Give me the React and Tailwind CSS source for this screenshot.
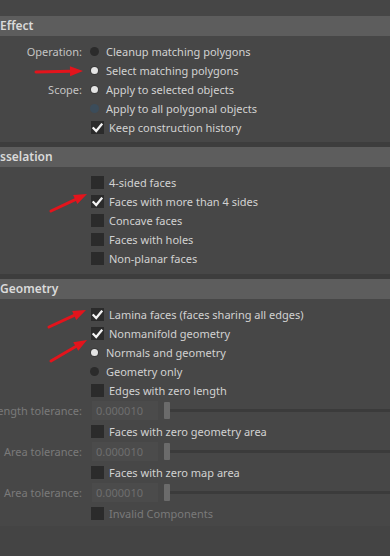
import React from "react";

const font = { fontFamily: '"Noto Sans", "Open Sans", sans-serif' };

function Header({ children }) {
  return (
    <div className="h-[20px] bg-[#5d5d5d] flex items-center text-[12px] font-semibold text-[#dadada] leading-none pl-0">
      {children}
    </div>
  );
}

function Label({ children, dim }) {
  return (
    <div className={`w-[82px] shrink-0 flex justify-end ${dim ? "text-[#7a7a7a]" : "text-[#c4c4c4]"}`}>
      <span className="whitespace-nowrap shrink-0">{children}</span>
    </div>
  );
}

function Radio({ label, state, text }) {
  let dot;
  if (state === "on") {
    dot = (
      <div className="w-[9px] h-[9px] rounded-full bg-[#3a3a3a] flex items-center justify-center">
        <div className="w-[7px] h-[7px] rounded-full bg-[#e4e4e4]" />
      </div>
    );
  } else if (state === "blue") {
    dot = <div className="w-[9px] h-[9px] rounded-full bg-[#3b4c5a]" />;
  } else {
    dot = <div className="w-[9px] h-[9px] rounded-full bg-[#2b2b2b]" />;
  }
  return (
    <div className="h-[19px] flex items-center">
      <Label>{label}</Label>
      <div className="ml-[8px] w-[9px] flex items-center">{dot}</div>
      <div className="ml-[7px] text-[#d2d2d2] whitespace-nowrap">{text}</div>
    </div>
  );
}

function Check({ checked, text, dim, tall }) {
  return (
    <div className={`${tall ? "h-[20px]" : "h-[19px]"} flex items-center`}>
      <Label />
      <div className="ml-[9px] w-[13px] h-[13px] bg-[#2b2b2b] flex items-center justify-center">
        {checked && (
          <svg width="11" height="10" viewBox="0 0 11 10">
            <path d="M1.5 5.2 L4.2 8 L9.5 1.5" stroke="#f4f4f4" strokeWidth="2.2" fill="none" strokeLinecap="square" />
          </svg>
        )}
      </div>
      <div className={`ml-[5px] whitespace-nowrap ${dim ? "text-[#7a7a7a]" : "text-[#d2d2d2]"}`}>{text}</div>
    </div>
  );
}

function SliderRow({ label }) {
  return (
    <div className="h-[21px] flex items-center">
      <Label dim>{label}</Label>
      <div className="ml-[10px] w-[66px] h-[19px] bg-[#4b4b4b] flex items-center pl-[4px] text-[#6e6e6e]">0.000010</div>
      <div className="ml-[6px] w-[6px] h-[17px] bg-[#6b6b6b] rounded-[1px]" />
      <div className="flex-1 h-[3px] bg-[#3b3b3b]" />
    </div>
  );
}

function Arrow({ x1, y1, x2, y2 }) {
  const ang = Math.atan2(y2 - y1, x2 - x1);
  const len = 13;
  const w = 5;
  const bx = x2 - len * Math.cos(ang);
  const by = y2 - len * Math.sin(ang);
  const px = -Math.sin(ang) * w;
  const py = Math.cos(ang) * w;
  return (
    <g>
      <line x1={x1} y1={y1} x2={bx} y2={by} stroke="#e3141c" strokeWidth="3" strokeLinecap="round" />
      <polygon points={`${x2},${y2} ${bx + px},${by + py} ${bx - px},${by - py}`} fill="#e3141c" />
    </g>
  );
}

export default function App() {
  return (
    <div className="relative w-[390px] h-[556px] bg-[#444444] overflow-hidden text-[11px] leading-none" style={font}>
      <div className="h-[16px] bg-[#464646]" />
      <Header>Effect</Header>
      <div className="bg-[#474747] pt-[6px] pb-[5px]">
        <Radio label="Operation:" state="off" text="Cleanup matching polygons" />
        <Radio label="" state="on" text="Select matching polygons" />
        <Radio label="Scope:" state="on" text="Apply to selected objects" />
        <Radio label="" state="blue" text="Apply to all polygonal objects" />
        <Check checked text="Keep construction history" />
      </div>
      <div className="h-[5px] bg-[#3d3d3d]" />
      <Header>sselation</Header>
      <div className="bg-[#474747] pt-[6px] pb-[6px]">
        <Check text="4-sided faces" />
        <Check checked text="Faces with more than 4 sides" />
        <Check text="Concave faces" />
        <Check text="Faces with holes" />
        <Check text="Non-planar faces" />
      </div>
      <div className="h-[5px] bg-[#3d3d3d]" />
      <Header>Geometry</Header>
      <div className="bg-[#474747] pt-[6px] pb-[3px]">
        <Check checked text="Lamina faces (faces sharing all edges)" />
        <Check checked text="Nonmanifold geometry" />
        <Radio label="" state="on" text="Normals and geometry" />
        <Radio label="" state="off" text="Geometry only" />
        <Check text="Edges with zero length" />
        <SliderRow label="Length tolerance:" />
        <Check tall text="Faces with zero geometry area" />
        <SliderRow label="Area tolerance:" />
        <Check tall text="Faces with zero map area" />
        <SliderRow label="Area tolerance:" />
        <Check tall dim text="Invalid Components" />
      </div>
      <svg className="absolute left-0 top-0 pointer-events-none" width="390" height="556">
        <Arrow x1={36} y1={72} x2={83} y2={71} />
        <Arrow x1={51} y1={211} x2={87} y2={194} />
        <Arrow x1={49} y1={327} x2={86} y2={310} />
        <Arrow x1={51} y1={361} x2={87} y2={340} />
      </svg>
    </div>
  );
}
